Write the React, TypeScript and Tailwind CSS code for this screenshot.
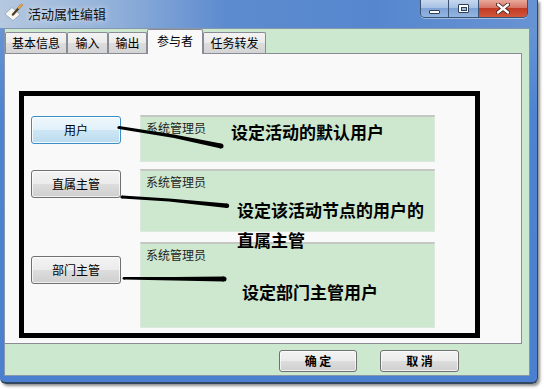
const btn =
  'flex items-center justify-center rounded-[3px] border border-[#707070] bg-[linear-gradient(#f3f3f3,#ebebeb_50%,#dddddd_50%,#cfcfcf)] text-[12px] text-black shadow-[inset_0_0_0_1px_rgba(255,255,255,0.7)]'
const hotBtn =
  'flex items-center justify-center rounded-[3px] border border-[#3c8fc6] bg-[linear-gradient(#eef7fc,#e1f0f9_50%,#cde6f5_50%,#bcdcef)] text-[12px] text-black shadow-[inset_0_0_0_1px_rgba(255,255,255,0.8)]'
const tab =
  'flex h-[21px] items-center justify-center rounded-t-[2px] border border-b-0 border-[#898c95] bg-[linear-gradient(#f3f3f3,#ebebeb_50%,#dddddd_50%,#d4d4d4)] text-[12px] text-black'
const box =
  'flex flex-col border border-[#dbe8dc] border-t-2 border-t-[#c3c8c3] bg-[#cde8cf] pl-[5px] pt-[4px] text-[12px] leading-[14px] text-[#222]'

function TitleIcon() {
  return (
    <svg width="19" height="19" viewBox="0 0 19 19">
      <polygon points="1,11 8,4.5 16,11.5 9,17.5" fill="#ffffff" stroke="#8e9db0" strokeWidth="0.8" />
      <polygon points="2.5,11 8,6 14,11.5 9,16" fill="#f7f5ec" />
      <line x1="17.5" y1="2" x2="9" y2="11.5" stroke="#4f3f26" strokeWidth="2.4" strokeLinecap="round" />
      <line x1="17.5" y1="2" x2="15" y2="4.8" stroke="#e2a646" strokeWidth="2.4" strokeLinecap="round" />
    </svg>
  )
}

function Controls() {
  return (
    <div className="flex h-[18px] overflow-hidden rounded-b-[5px] border border-t-0 border-[#3a5274] shadow-[0_1px_0_rgba(255,255,255,0.4)]">
      <div className="flex w-[28px] items-center justify-center border-r border-[#3a5274] bg-[linear-gradient(#c7d8ee,#a4bfe3_50%,#7fa3d6_50%,#93b5e0)]">
        <div className="mt-[6px] h-[4px] w-[11px] rounded-[1px] border border-[#2c3e58] bg-white" />
      </div>
      <div className="flex w-[30px] items-center justify-center border-r border-[#3a5274] bg-[linear-gradient(#c7d8ee,#a4bfe3_50%,#7fa3d6_50%,#93b5e0)]">
        <div className="flex h-[9px] w-[11px] items-center justify-center rounded-[1px] border border-[#2c3e58] bg-white">
          <div className="h-[4px] w-[6px] border border-[#2c3e58] bg-[#9fbbe0]" />
        </div>
      </div>
      <div className="flex w-[48px] items-center justify-center bg-[linear-gradient(#e9a99b,#d67060_50%,#c23b25_50%,#d2573c)]">
        <svg width="14" height="11" viewBox="0 0 14 11">
          <path d="M2 1.5 L12 9.5 M12 1.5 L2 9.5" stroke="#3b1a14" strokeWidth="4" strokeLinecap="round" />
          <path d="M2 1.5 L12 9.5 M12 1.5 L2 9.5" stroke="#ffffff" strokeWidth="2.4" strokeLinecap="round" />
        </svg>
      </div>
    </div>
  )
}

function Strokes() {
  return (
    <svg className="pointer-events-none absolute inset-0" width="451" height="237" viewBox="0 0 451 237">
      <polygon points="95,30 150,38.5 197,47.5 197,52.5 150,42 95,33" fill="#000" />
      <circle cx="95" cy="31.5" r="1.6" fill="#000" />
      <circle cx="197" cy="50" r="2.5" fill="#000" />
      <polygon points="98,99.5 145,102.5 203,107.5 203,112 145,105.5 98,102.5" fill="#000" />
      <circle cx="98" cy="101" r="1.6" fill="#000" />
      <circle cx="203" cy="109.8" r="2.2" fill="#000" />
      <polygon points="100,181 150,181 200,180.5 200,185.5 150,184.5 100,183.5" fill="#000" />
      <circle cx="100" cy="182.3" r="1.4" fill="#000" />
      <circle cx="200" cy="183" r="2.5" fill="#000" />
    </svg>
  )
}

export default function App() {
  return (
    <div className="h-[389px] w-[544px] bg-white font-['Noto_Sans_CJK_SC','Noto_Sans',sans-serif]">
      <div className="flex h-[384px] w-[538px] flex-col rounded-b-[6px] border-r border-b-2 border-[#33475f] bg-[linear-gradient(to_bottom,#6f9ad6,#4d83d0_30%,#4a80cf)] shadow-[2px_2px_3px_rgba(0,0,0,0.45)]">
        {/* title bar */}
        <div className="flex h-[28px] items-start bg-[linear-gradient(to_right,#b5c8df_0%,#8fafd9_22%,#5d8bcf_42%,#5687ce_70%,#6893d3_100%)] pl-[4px] pr-[9px]">
          <div className="mt-[3px]">
            <TitleIcon />
          </div>
          <div className="ml-[5px] mt-[5px] text-[13px] leading-[17px] text-[#111] [text-shadow:0_0_6px_rgba(255,255,255,0.9)]">
            活动属性编辑
          </div>
          <div className="ml-auto">
            <Controls />
          </div>
        </div>

        {/* client */}
        <div className="flex-1 pb-[6px] pl-[4px] pr-[7px]">
          <div className="flex h-full flex-col border border-[#8796ab] bg-[#cce8cf]">
            {/* tabs */}
            <div className="flex h-[24px] items-end">
              <div className={tab + ' w-[62px]'}>基本信息</div>
              <div className={tab + ' w-[41px]'}>输入</div>
              <div className={tab + ' w-[39px]'}>输出</div>
              <div className="relative z-10 -mb-px flex h-[25px] w-[56px] items-center justify-center rounded-t-[2px] border border-b-0 border-[#898c95] bg-[#f9f9f9] pb-[2px] text-[12px] text-black">
                参与者
              </div>
              <div className={tab + ' w-[63px]'}>任务转发</div>
            </div>

            {/* panel */}
            <div className="h-[291px] w-[517px] border border-l-0 border-[#898c95] bg-[#f9f9f9] pl-[14px] pt-[37px]">
              <div className="relative flex h-[247px] w-[461px] flex-col gap-[7px] border-[5px] border-black pl-[7px] pt-[19px]">
                <div className="flex gap-[19px]">
                  <div className={hotBtn + ' mt-[1px] h-[28px] w-[90px]'}>用户</div>
                  <div className={box + ' h-[47px] w-[295px]'}>系统管理员</div>
                </div>
                <div className="flex gap-[19px]">
                  <div className={btn + ' mt-[1px] h-[28px] w-[90px]'}>直属主管</div>
                  <div className={box + ' h-[63px] w-[295px]'}>系统管理员</div>
                </div>
                <div className="mt-[3px] flex gap-[19px]">
                  <div className={btn + ' mt-[14px] h-[28px] w-[90px]'}>部门主管</div>
                  <div className={box + ' h-[86px] w-[295px]'}>系统管理员</div>
                </div>

                <Strokes />
                <div className="absolute left-[207px] top-[26px] text-[17px] font-bold leading-[20px] text-black">
                  设定活动的默认用户
                </div>
                <div className="absolute left-[213px] top-[99px] text-[17px] font-bold leading-[30px] text-black">
                  <div>设定该活动节点的用户的</div>
                  <div>直属主管</div>
                </div>
                <div className="absolute left-[218px] top-[186px] text-[17px] font-bold leading-[20px] text-black">
                  设定部门主管用户
                </div>
              </div>
            </div>

            {/* footer */}
            <div className="flex flex-1 pl-[274px] pt-[6px]">
              <div className={btn + ' h-[22px] w-[78px] font-bold whitespace-pre'}>确 定</div>
              <div className={btn + ' ml-[23px] h-[22px] w-[79px] font-bold whitespace-pre'}>取 消</div>
            </div>
          </div>
        </div>
      </div>
    </div>
  )
}
